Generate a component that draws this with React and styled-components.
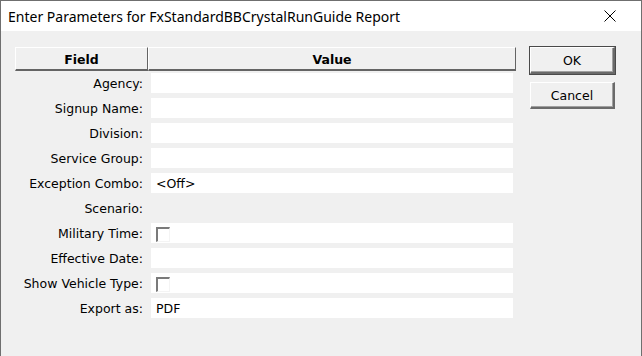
import React from 'react'
import styled, { createGlobalStyle } from 'styled-components'

const GlobalStyle = createGlobalStyle`
  html, body {
    margin: 0;
    padding: 0;
    background: #f0f0f0;
  }
`

const Window = styled.div`
  width: 642px;
  height: 356px;
  box-sizing: border-box;
  border: 1px solid #6f6f6f;
  border-bottom: none;
  background: #f0f0f0;
  display: flex;
  flex-direction: column;
  overflow: hidden;
`

const TitleBar = styled.div`
  height: 30px;
  background: #fff;
  display: flex;
  align-items: center;
  justify-content: space-between;
  padding: 0 0 0 7px;
  font-family: 'Noto Sans', 'Open Sans', sans-serif;
  font-size: 14px;
  color: #000;
`

const Close = styled.div`
  width: 62px;
  height: 30px;
  display: flex;
  align-items: center;
  justify-content: center;
`

const Body = styled.div`
  flex: 1;
  display: flex;
  align-items: flex-start;
  gap: 14px;
  padding: 16px 0 0 14px;
  font-family: 'DejaVu Sans', Verdana, sans-serif;
  font-size: 12.5px;
  color: #000;
`

const Grid = styled.div`
  width: 501px;
  display: flex;
  flex-direction: column;
`

const Header = styled.div`
  display: flex;
  height: 24px;
`

const HeadCell = styled.div`
  width: ${p => p.w}px;
  box-sizing: border-box;
  border-top: 1px solid #fff;
  border-left: 1px solid #fff;
  border-bottom: 2px solid #646464;
  border-right: 1px solid #646464;
  display: flex;
  align-items: center;
  justify-content: center;
  font-weight: bold;
  padding-top: 1px;
`

const Rows = styled.div`
  display: flex;
  flex-direction: column;
  gap: 5px;
  padding-top: 2px;
`

const Row = styled.div`
  display: flex;
  height: 20px;
  align-items: stretch;
`

const Label = styled.div`
  width: 128px;
  padding-right: 8px;
  white-space: nowrap;
  display: flex;
  align-items: center;
  justify-content: flex-end;
`

const Value = styled.div`
  width: 362px;
  background: ${p => (p.empty ? 'transparent' : '#fff')};
  display: flex;
  align-items: center;
  padding-left: 5px;
  box-sizing: border-box;
`

const Check = styled.div`
  width: 14px;
  height: 15px;
  margin-top: 2px;
  box-sizing: border-box;
  border-top: 2px solid #7a7a7a;
  border-left: 2px solid #7a7a7a;
  border-right: 1px solid #f4f4f4;
  border-bottom: 1px solid #f4f4f4;
  background: #fff;
`

const Buttons = styled.div`
  display: flex;
  flex-direction: column;
  gap: 8px;
`

const Button = styled.div`
  width: 85px;
  height: 27px;
  box-sizing: border-box;
  background: #f0f0f0;
  display: flex;
  align-items: center;
  justify-content: center;
  font-family: 'DejaVu Sans', sans-serif;
  font-size: 12.5px;
  border-top: 1px solid #fff;
  border-left: 1px solid #fff;
  border-right: 2px solid #6a6a6a;
  border-bottom: 2px solid #6a6a6a;
  outline: ${p => (p.primary ? '1px solid #4a4a4a' : 'none')};
  box-shadow: inset -1px -1px 0 #a0a0a0;
`

const rows = [
  { label: 'Agency:', value: '' },
  { label: 'Signup Name:', value: '' },
  { label: 'Division:', value: '' },
  { label: 'Service Group:', value: '' },
  { label: 'Exception Combo:', value: '<Off>' },
  { label: 'Scenario:', empty: true },
  { label: 'Military Time:', check: true },
  { label: 'Effective Date:', value: '' },
  { label: 'Show Vehicle Type:', check: true },
  { label: 'Export as:', value: 'PDF' }
]

export default function App () {
  return (
    <>
      <GlobalStyle />
      <Window>
        <TitleBar>
          <span>Enter Parameters for FxStandardBBCrystalRunGuide Report</span>
          <Close>
            <svg width='12' height='12' viewBox='0 0 12 12'>
              <path d='M0.5 0.5 L11.5 11.5 M11.5 0.5 L0.5 11.5' stroke='#000' strokeWidth='1' />
            </svg>
          </Close>
        </TitleBar>
        <Body>
          <Grid>
            <Header>
              <HeadCell w={133}>Field</HeadCell>
              <HeadCell w={368}>Value</HeadCell>
            </Header>
            <Rows>
              {rows.map((r) => (
                <Row key={r.label}>
                  <Label>{r.label}</Label>
                  <Value empty={r.empty}>
                    {r.check ? <Check /> : r.value}
                  </Value>
                </Row>
              ))}
            </Rows>
          </Grid>
          <Buttons>
            <Button primary>OK</Button>
            <Button>Cancel</Button>
          </Buttons>
        </Body>
      </Window>
    </>
  )
}
